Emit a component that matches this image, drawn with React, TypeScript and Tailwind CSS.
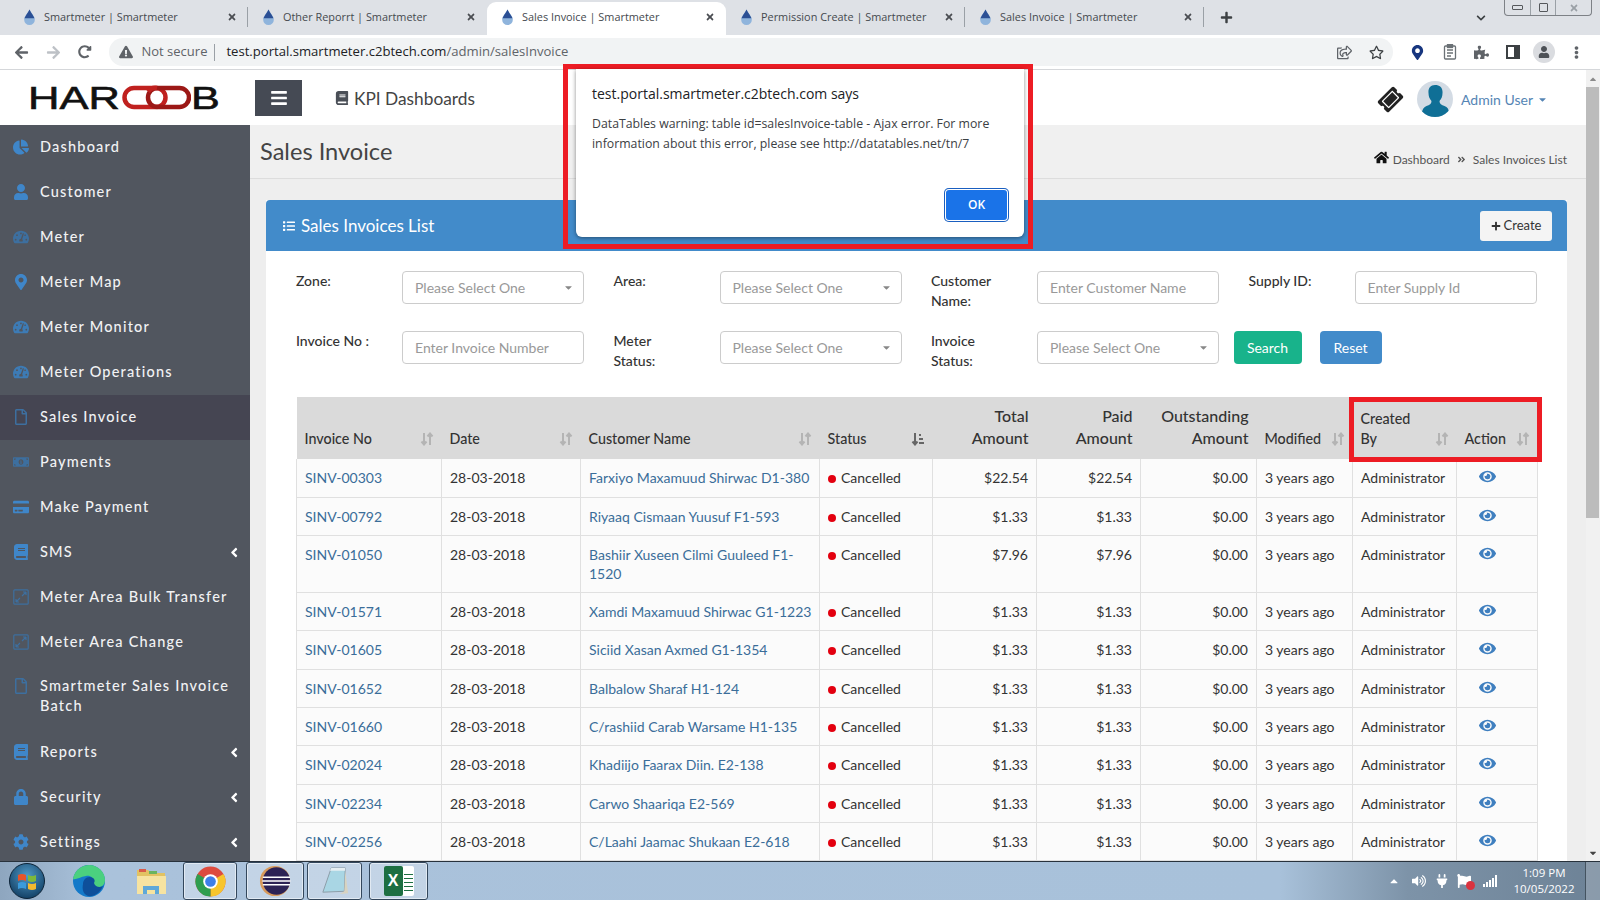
import {
  FaArrowLeft, FaArrowRight, FaRedoAlt, FaExclamationTriangle, FaRegStar, FaPuzzlePiece, FaUser, FaTimes, FaPlus,
  FaChevronDown, FaChartPie, FaTachometerAlt, FaMapMarkerAlt, FaRegFile, FaMoneyBillAlt, FaCreditCard, FaLock, FaCog,
  FaAngleLeft, FaBars, FaHome, FaEye, FaList, FaCaretDown, FaBook, FaVolumeUp, FaPlug, FaFlag, FaCaretUp, FaTicketAlt,
  FaAngleDoubleRight, FaEllipsisV, FaRegShareSquare,
} from "react-icons/fa";
import type { ReactNode } from "react";

const TABS = [
  { title: "Smartmeter | Smartmeter" },
  { title: "Other Reporrt | Smartmeter" },
  { title: "Sales Invoice | Smartmeter", active: true },
  { title: "Permission Create | Smartmeter" },
  { title: "Sales Invoice | Smartmeter" },
];

const ROWS = [
  ["SINV-00303", "Farxiyo Maxamuud Shirwac D1-380", "$22.54", "$22.54"],
  ["SINV-00792", "Riyaaq Cismaan Yuusuf F1-593", "$1.33", "$1.33"],
  ["SINV-01050", "Bashiir Xuseen Cilmi Guuleed F1-1520", "$7.96", "$7.96"],
  ["SINV-01571", "Xamdi Maxamuud Shirwac G1-1223", "$1.33", "$1.33"],
  ["SINV-01605", "Siciid Xasan Axmed G1-1354", "$1.33", "$1.33"],
  ["SINV-01652", "Balbalow Sharaf H1-124", "$1.33", "$1.33"],
  ["SINV-01660", "C/rashiid Carab Warsame H1-135", "$1.33", "$1.33"],
  ["SINV-02024", "Khadiijo Faarax Diin. E2-138", "$1.33", "$1.33"],
  ["SINV-02234", "Carwo Shaariqa E2-569", "$1.33", "$1.33"],
  ["SINV-02256", "C/Laahi Jaamac Shukaan E2-618", "$1.33", "$1.33"],
];

function Drop() {
  return (
    <svg viewBox="0 0 14 18" className="h-[16px] w-[13px] shrink-0">
      <path d="M7 0.5 C9 5 13 8 13 12 A6 6 0 0 1 1 12 C1 8 5 5 7 0.5Z" fill="#8fb4dc" />
      <path d="M7 0.5 C9 5 12 8 12.6 10.5 L1.4 10.5 C2 8 5 5 7 0.5Z" fill="#2b4f94" />
    </svg>
  );
}

function Tab({ title, active }: { title: string; active?: boolean }) {
  return (
    <div
      className={
        active
          ? "flex h-[33px] w-[239px] items-center rounded-t-[9px] bg-white pb-[3px] pl-[14px] pr-[11px]"
          : "flex h-[33px] w-[239px] items-center pb-[3px] pl-[14px] pr-[11px]"
      }
    >
      <Drop />
      <span className="ml-[8px] flex-1 truncate text-[10.9px] text-[#45494e]">{title}</span>
      <FaTimes className="text-[10px] text-[#4a4d52]" />
    </div>
  );
}

function ChromeBar() {
  return (
    <div className="font-['Open_Sans',sans-serif]">
      <div className="relative flex h-[35px] items-end bg-[#dee1e6] pl-[9px]">
        {TABS.map((t, i) => (
          <div key={i} className="flex items-center">
            <Tab title={t.title} active={t.active} />
            {i !== 1 && i !== 2 && <span className="mb-[3px] h-[20px] w-px bg-[#9aa0a6] -ml-px" />}
          </div>
        ))}
        <FaPlus className="ml-[16px] mb-[11px] text-[13px] text-[#3c4043]" />
        <FaChevronDown className="ml-[243px] mb-[12px] text-[10px] text-[#3c4043]" />
        <div className="mb-[19px] ml-[18px] flex h-[16px] w-[88px] rounded-b-[4px] border border-t-0 border-[#7d8186] text-[#55585c]">
          <span className="flex flex-1 items-center justify-center border-r border-[#9aa0a6]"><span className="h-[5px] w-[11px] rounded-[1px] border border-[#55585c]" /></span>
          <span className="flex flex-1 items-center justify-center border-r border-[#9aa0a6]"><span className="h-[9px] w-[9px] rounded-[1px] border border-[#55585c]" /></span>
          <span className="flex flex-[1.4] items-center justify-center text-[10px] text-[#9aa0a6]"><FaTimes /></span>
        </div>
      </div>
      <div className="flex h-[35px] items-center border-b border-[#d5d7da] bg-white text-[#5f6368]">
        <FaArrowLeft className="ml-[14px] text-[15px]" />
        <FaArrowRight className="ml-[17px] text-[15px] text-[#bdc1c6]" />
        <FaRedoAlt className="ml-[17px] text-[13.5px]" />
        <div className="ml-[17px] flex h-[28px] w-[1284px] items-center rounded-full bg-[#f1f3f4] pl-[10px]">
          <FaExclamationTriangle className="text-[14px] text-[#5f6368]" />
          <span className="ml-[9px] text-[13px] text-[#5f6368]">Not secure</span>
          <span className="ml-[7px] h-[17px] w-px bg-[#9aa0a6]" />
          <span className="ml-[11px] text-[13.1px] text-[#202124]">
            test.portal.smartmeter.c2btech.com<span className="text-[#5f6368]">/admin/salesInvoice</span>
          </span>
          <FaRegShareSquare className="ml-auto text-[15px]" />
          <FaRegStar className="ml-[17px] mr-[9px] text-[15px] text-[#3c4043]" />
        </div>
        <FaMapMarkerAlt className="ml-[17px] text-[15px] text-[#17367f]" />
        <svg viewBox="0 0 14 16" className="ml-[18px] h-[16px] w-[14px]" fill="none" stroke="#6b7176" strokeWidth="1.3">
          <rect x="1.5" y="2" width="11" height="13" rx="1" />
          <path d="M4 6h6M4 9h6M4 12h4" />
          <rect x="4.5" y="0.5" width="5" height="3" fill="#6b7176" />
        </svg>
        <FaPuzzlePiece className="ml-[17px] text-[15px] text-[#5f6368]" />
        <span className="ml-[17px] h-[14px] w-[14px] border-[2.5px] border-r-[6px] border-[#3c4043]" />
        <span className="ml-[13px] flex h-[22px] w-[22px] items-center justify-center rounded-full bg-[#dadce0]">
          <FaUser className="text-[12px] text-[#4d5156]" />
        </span>
        <FaEllipsisV className="ml-[15px] text-[13px] text-[#5f6368]" />
      </div>
    </div>
  );
}

function Logo() {
  return (
    <div className="flex w-[255px] items-center pl-[28px] font-['Liberation_Sans',sans-serif] text-[32px] leading-none text-[#111]">
      <span className="inline-block w-[94px] origin-left scale-x-[1.36] whitespace-nowrap [-webkit-text-stroke:0.6px_#111]">HAR</span>
      <svg viewBox="0 0 69 25" className="h-[25px] w-[69px]" fill="none" strokeWidth="4.5">
        <rect x="2.5" y="3" width="41" height="19" rx="9.5" stroke="#c0211f" />
        <rect x="26" y="3" width="41" height="19" rx="9.5" stroke="#9c1816" />
        <path d="M26 6.5A9.5 9.5 0 0 1 35 3h0" stroke="#c0211f" />
      </svg>
      <span className="inline-block origin-left scale-x-[1.35] [-webkit-text-stroke:0.6px_#111]">B</span>
    </div>
  );
}

function PageHeader() {
  return (
    <div className="flex h-[55px] items-center bg-white font-[Lato,sans-serif]">
      <Logo />
      <div className="mt-[1px] flex h-[36px] w-[47px] items-center justify-center bg-[#454a54] text-[18px] text-white">
        <FaBars />
      </div>
      <FaBook className="ml-[33px] text-[14px] text-[#4a4f57]" />
      <span className="ml-[5px] mt-[3px] text-[17.3px] text-[#444]">KPI Dashboards</span>
      <div className="ml-auto mt-[3px] flex items-center">
        <FaTicketAlt className="rotate-[-45deg] text-[23px] text-[#222]" />
        <svg viewBox="0 0 36 36" className="ml-[15px] h-[36px] w-[36px] rounded-full bg-[#d3dbe4]">
          <path d="M18 4c5 0 8 3 7.5 8 0 3-1 6-3 8 0 3 2 4 5 5 3 1 4 3 4.5 6A18 18 0 0 1 5 31c.5-3 2-5 4.500-6 3-1 5-2 5-5-2-2-3-5-3-8C11 8 13 4 18 4z" fill="#0f6f96" />
        </svg>
        <span className="ml-[8px] text-[14px] text-[#5585b5]">Admin User</span>
        <FaCaretDown className="ml-[4px] mr-[38px] text-[11px] text-[#5585b5]" />
      </div>
    </div>
  );
}

function AreaIcon() {
  return (
    <svg viewBox="0 0 16 16" className="h-[16px] w-[16px]" fill="none" stroke="currentColor" strokeWidth="1.2">
      <rect x="0.8" y="0.8" width="14.4" height="14.4" rx="1" />
      <path d="M9 7l4-4M13 3h-3M13 3v3M7 9l-4 4M3 13h3M3 13v-3" />
    </svg>
  );
}

type NavItem = { label: ReactNode; icon: ReactNode; active?: boolean; more?: boolean; tall?: boolean };

const NAV: NavItem[] = [
  { label: "Dashboard", icon: <FaChartPie className="text-[#3f86c9]" /> },
  { label: "Customer", icon: <FaUser className="text-[#3f86c9]" /> },
  { label: "Meter", icon: <FaTachometerAlt className="text-[#3d6f9f]" /> },
  { label: "Meter Map", icon: <FaMapMarkerAlt className="text-[#3f86c9]" /> },
  { label: "Meter Monitor", icon: <FaTachometerAlt className="text-[#3d7bb5]" /> },
  { label: "Meter Operations", icon: <FaTachometerAlt className="text-[#3d7bb5]" /> },
  { label: "Sales Invoice", icon: <FaRegFile className="text-[#3d6f9f]" />, active: true },
  { label: "Payments", icon: <FaMoneyBillAlt className="text-[#3d6f9f]" /> },
  { label: "Make Payment", icon: <FaCreditCard className="text-[#3f86c9]" /> },
  { label: "SMS", icon: <FaBook className="text-[#3f86c9]" />, more: true },
  { label: "Meter Area Bulk Transfer", icon: <span className="text-[#3d6f9f]"><AreaIcon /></span> },
  { label: "Meter Area Change", icon: <span className="text-[#3d6f9f]"><AreaIcon /></span> },
  { label: "Smartmeter Sales Invoice Batch", icon: <FaRegFile className="text-[#3d6f9f]" />, tall: true },
  { label: "Reports", icon: <FaBook className="text-[#3f86c9]" />, more: true },
  { label: "Security", icon: <FaLock className="text-[#3f86c9]" />, more: true },
  { label: "Settings", icon: <FaCog className="text-[#3f86c9]" />, more: true },
];

function Sidebar() {
  return (
    <aside className="w-[250px] shrink-0 overflow-hidden bg-[#51565f] font-[Lato,sans-serif] text-[14.5px] font-medium leading-[20px] tracking-[1.2px] text-[#f1f2f4]">
      {NAV.map((n, i) => (
        <div
          key={i}
          className={
            (n.active ? "bg-[#454552] " : "") +
            (n.tall ? "h-[65px] items-start pt-[11px] " : "h-[45px] items-center pb-[2px] ") +
            "flex pl-[13px] pr-[9px]"
          }
        >
          <span className={(n.tall ? "mt-[2px] " : "") + "flex w-[27px] shrink-0 justify-center pr-[11px] text-[16px]"}>{n.icon}</span>
          <span className="ml-0 w-[195px]">{n.label}</span>
          {n.more && <FaAngleLeft className="ml-auto mt-[2px] text-[15px] text-white" />}
        </div>
      ))}
    </aside>
  );
}

function Field({ label, placeholder, select }: { label: ReactNode; placeholder?: string; select?: boolean }) {
  return (
    <div className="flex h-[40px]">
      <div className="w-[106px] text-[14px] font-medium leading-[20px] text-[#333]">{label}</div>
      <div className="flex h-[33px] w-[182px] items-center justify-between rounded-[4px] border border-[#ccc] bg-white pl-[12px] pr-[9px] text-[14px] text-[#999]">
        <span>{placeholder}</span>
        {select && <FaCaretDown className="text-[11px] text-[#888]" />}
      </div>
    </div>
  );
}

function Filters() {
  return (
    <div className="grid grid-cols-[288px_288px_288px_288px] gap-x-[29.5px] gap-y-[20px] pt-[20px]">
      <Field label="Zone:" placeholder="Please Select One" select />
      <Field label="Area:" placeholder="Please Select One" select />
      <Field label={<>Customer<br />Name:</>} placeholder="Enter Customer Name" />
      <Field label="Supply ID:" placeholder="Enter Supply Id" />
      <Field label="Invoice No :" placeholder="Enter Invoice Number" />
      <Field label={<>Meter<br />Status:</>} placeholder="Please Select One" select />
      <Field label={<>Invoice<br />Status:</>} placeholder="Please Select One" select />
      <div className="-ml-[15px] flex gap-[18px] text-[14px] text-white">
        <span className="flex h-[33px] w-[68px] items-center justify-center rounded-[4px] bg-[#18b38b]">Search</span>
        <span className="flex h-[33px] w-[62px] items-center justify-center rounded-[4px] bg-[#428bca]">Reset</span>
      </div>
    </div>
  );
}

function SortIcon({ dark }: { dark?: boolean }) {
  const c = dark ? "#666" : "#b4b4b4";
  return (
    <svg viewBox="0 0 14 14" className="h-[14px] w-[14px] shrink-0" fill="none" stroke={c} strokeWidth="2">
      <path d="M4 1v11M1.5 9.5L4 12.5l2.500-3" />
      {dark ? <path d="M8 3h2M8 7h4M8 11h5" /> : <path d="M10 13V2M7.5 4.500L10 1.500l2.500 3" />}
    </svg>
  );
}

function Th({ children, sort, right, dark }: { children: ReactNode; sort?: boolean; right?: boolean; dark?: boolean }) {
  return (
    <th
      className={
        (right ? "text-right text-[16px] leading-[22px] " : "text-left text-[14.3px] leading-[20px] ") +
        "align-bottom px-[8px] pb-[10px] font-medium"
      }
    >
      <div className={sort ? "flex items-end justify-between" : ""}>
        <span>{children}</span>
        {sort && <span className="mb-[3px]"><SortIcon dark={dark} /></span>}
      </div>
    </th>
  );
}

function InvoiceTable() {
  const td = "border-r border-b border-[#e0e0e0] px-[8px] py-[9px] align-top";
  return (
    <table className="mt-[26px] w-[1241px] table-fixed border-collapse text-[14px] leading-[19px] text-[#333]">
      <colgroup>
        <col className="w-[145px]" />
        <col className="w-[139px]" />
        <col className="w-[239px]" />
        <col className="w-[113px]" />
        <col className="w-[104px]" />
        <col className="w-[104px]" />
        <col className="w-[116px]" />
        <col className="w-[96px]" />
        <col className="w-[104px]" />
        <col className="w-[81px]" />
      </colgroup>
      <thead>
        <tr className="h-[62px] bg-[#dadada]">
          <Th sort>Invoice No</Th>
          <Th sort>Date</Th>
          <Th sort>Customer Name</Th>
          <Th sort dark>Status</Th>
          <Th right>Total<br />Amount</Th>
          <Th right>Paid<br />Amount</Th>
          <Th right>Outstanding<br />Amount</Th>
          <Th sort>Modified</Th>
          <Th sort>Created<br />By</Th>
          <Th sort>Action</Th>
        </tr>
      </thead>
      <tbody>
        {ROWS.map((r) => (
          <tr key={r[0]} className="h-[38.3px] bg-[#fbfbfb]">
            <td className={td + " border-l text-[#3a6d99]"}>{r[0]}</td>
            <td className={td}>28-03-2018</td>
            <td className={td + " !pr-[3px] text-[#3a6d99]"}>{r[1]}</td>
            <td className={td}>
              <span className="mr-[5px] inline-block h-[8px] w-[8px] rounded-full bg-[#e3000f]" />
              Cancelled
            </td>
            <td className={td + " text-right"}>{r[2]}</td>
            <td className={td + " text-right"}>{r[3]}</td>
            <td className={td + " text-right"}>$0.00</td>
            <td className={td + " whitespace-nowrap"}>3 years ago</td>
            <td className={td}>Administrator</td>
            <td className={td}>
              <FaEye className="ml-[14px] text-[17px] text-[#3f7fbf]" />
            </td>
          </tr>
        ))}
      </tbody>
    </table>
  );
}

function Content() {
  return (
    <main className="min-w-0 flex-1 overflow-hidden bg-[#eeeeee] font-[Lato,sans-serif]">
      <div className="flex h-[54px] items-center justify-between border-b border-[#ddd] bg-[#f0f0f0] pl-[10px] pr-[19px]">
        <span className="text-[23.6px] text-[#444]">Sales Invoice</span>
        <span className="mt-[16px] flex items-center text-[12px] text-[#555]">
          <FaHome className="mb-[4px] mr-[4px] text-[15px] text-[#111]" />
          Dashboard
          <FaAngleDoubleRight className="mx-[7px] text-[9px]" />
          Sales Invoices List
        </span>
      </div>
      <section className="ml-[16px] mr-[19px] mt-[21px] bg-white">
        <div className="flex h-[51px] items-center justify-between rounded-t-[4px] bg-[#428bca] pl-[17px] pr-[15px] text-white">
          <span className="flex items-center text-[17px]">
            <FaList className="mr-[6px] text-[12px]" />
            Sales Invoices List
          </span>
          <span className="flex h-[30px] w-[72px] items-center justify-center rounded-[3px] bg-[#f4f4f4] text-[13px] text-[#333]">
            <FaPlus className="mr-[3px] text-[10px]" />
            Create
          </span>
        </div>
        <div className="px-[30px]">
          <Filters />
          <InvoiceTable />
        </div>
      </section>
    </main>
  );
}

function AlertDialog() {
  return (
    <div className="absolute left-[563px] top-[-6px] z-10 h-[185px] w-[470px] border-[5px] border-[#ed1c24] p-[8px] pt-0 font-['Open_Sans',sans-serif]">
      <div className="relative h-[168px] w-[448px] rounded-b-[6px] bg-white pl-[16px] pr-[14px] pt-[14px] shadow-[0_1px_4px_rgba(0,0,0,0.45)]">
        <div className="text-[14px] leading-[22px] text-[#202124]">test.portal.smartmeter.c2btech.com says</div>
        <div className="mt-[9px] text-[12.3px] leading-[20px] text-[#3c4043]">
          DataTables warning: table id=salesInvoice-table - Ajax error. For more information about this error, please see http://datatables.net/tn/7
        </div>
        <span className="absolute bottom-[15px] right-[15px] flex h-[34px] w-[65px] items-center justify-center rounded-[5px] bg-[#1a73e8] text-[12px] font-semibold text-white shadow-[inset_0_0_0_1px_#1a5fc0,inset_0_0_0_2px_#fff]">
          OK
        </span>
      </div>
    </div>
  );
}

function Tile({ w, on, children }: { w: number; on?: boolean; children: ReactNode }) {
  return (
    <div
      className={
        (on ? "border border-[#33475c] bg-white/30 shadow-[inset_0_0_0_1px_rgba(255,255,255,0.5)] " : "") +
        "flex h-[38px] shrink-0 items-center justify-center rounded-[3px]"
      }
      style={{ width: w }}
    >
      {children}
    </div>
  );
}

function Taskbar() {
  return (
    <div className="flex h-[39px] shrink-0 items-center border-t border-[#28323c] bg-[linear-gradient(90deg,#8ea6bf_0%,#aac2db_6%,#a8c1da_80%,#7d93a8_88%,#6d8296_100%)] font-['Open_Sans',sans-serif]">
      <Tile w={54}>
        <svg viewBox="0 0 36 36" className="h-[36px] w-[36px]">
          <defs>
            <radialGradient id="orb" cx="50%" cy="35%" r="70%">
              <stop offset="0%" stopColor="#4f9ac9" />
              <stop offset="100%" stopColor="#0f3a5e" />
            </radialGradient>
          </defs>
          <circle cx="18" cy="18" r="17.5" fill="url(#orb)" stroke="#0d2438" />
          <path d="M9 12q4-2 8 0v6q-4-2-8 0z" fill="#e8542a" />
          <path d="M19 12q4 2 8 0v6q-4 2-8 0z" fill="#7db93c" />
          <path d="M9 20q4-2 8 0v6q-4-2-8 0z" fill="#3b9bdc" />
          <path d="M19 20q4 2 8 0v6q-4 2-8 0z" fill="#f4b92f" />
        </svg>
      </Tile>
      <Tile w={70}>
        <svg viewBox="0 0 34 34" className="h-[34px] w-[34px]">
          <circle cx="17" cy="17" r="16" fill="#1379c9" />
          <path d="M1 15C3 4 12 1 17 1c9 0 16 7 16 15 0 6-5 8-9 7-3-1-3-3-2-5 0-4-4-7-8-6-6 1-10 4-13 3z" fill="#4bd07f" />
          <path d="M11 20c0-5 5-9 10-6 3 2 1 5 1 5 1 4 6 5 9 3-3 7-9 11-15 10C11 30 10 25 11 20z" fill="#0e4f9a" />
        </svg>
      </Tile>
      <Tile w={54}>
        <svg viewBox="0 0 32 32" className="h-[32px] w-[32px]">
          <path d="M2 5h11l3 3h14v20H2z" fill="#e2c262" />
          <rect x="4" y="4" width="7" height="3" fill="#d95c4a" />
          <rect x="14" y="6" width="8" height="3" fill="#6ab45f" />
          <rect x="2" y="11" width="29" height="18" fill="#f6e3a1" />
          <path d="M8 29v-8h16v8h-4v-4h-8v4z" fill="#5fa8d8" />
        </svg>
      </Tile>
      <span className="w-[5px]" />
      <Tile w={54} on>
        <svg viewBox="0 0 32 32" className="h-[31px] w-[31px]">
          <circle cx="16" cy="16" r="15.5" fill="#dd4b3e" />
          <path d="M16 16L29.4 8.2A15.5 15.5 0 0 1 16 31.5z" fill="#f7c52d" />
          <path d="M16 16L16 31.5A15.5 15.5 0 0 1 2.6 8.2z" fill="#2f9e4f" />
          <circle cx="16" cy="16" r="7.5" fill="#fff" />
          <circle cx="16" cy="16" r="5.5" fill="#3f7fe8" />
        </svg>
      </Tile>
      <span className="w-[9px]" />
      <Tile w={58} on>
        <svg viewBox="0 0 34 34" className="h-[32px] w-[32px]">
          <circle cx="17" cy="17" r="16" fill="#d89a5b" />
          <circle cx="18.5" cy="17" r="14.5" fill="#2c2255" />
          <path d="M4 13h29M3.5 17h30M4 21h29" stroke="#fff" strokeWidth="1.6" />
        </svg>
      </Tile>
      <span className="w-[3px]" />
      <Tile w={55} on>
        <svg viewBox="0 0 30 32" className="h-[30px] w-[28px]">
          <path d="M11 2h15l-1 25-23 1z" fill="#a9d6e4" stroke="#8a9aa5" />
          <path d="M26 5l3 24-9 1 5-3z" fill="#d8d3c0" />
          <path d="M11 2h15l-.2 3H9.5z" fill="#e6eef2" />
        </svg>
      </Tile>
      <span className="w-[7px]" />
      <Tile w={59} on>
        <span className="relative flex h-[30px] w-[30px] items-center justify-end rounded-[2px] bg-white">
          <span className="absolute left-0 top-0 flex h-[30px] w-[19px] items-center justify-center rounded-[2px] bg-[#1d6f42] font-['Liberation_Sans',sans-serif] text-[16px] font-bold text-white">X</span>
          <span className="mr-[1px] h-[20px] w-[9px] bg-[repeating-linear-gradient(0deg,#1d6f42_0,#1d6f42_1px,#fff_1px,#fff_4px)]" />
        </span>
      </Tile>
      <div className="ml-auto flex items-center text-[#fff]">
        <FaCaretUp className="text-[12px] text-white" />
        <FaVolumeUp className="ml-[12px] text-[14px] text-white" />
        <FaPlug className="ml-[9px] text-[14px] text-white" />
        <span className="relative ml-[8px]">
          <FaFlag className="text-[14px] text-white" />
          <span className="absolute -bottom-[2px] -right-[4px] h-[9px] w-[9px] rounded-full bg-[#d9333f]" />
        </span>
        <span className="ml-[12px] flex h-[12px] items-end gap-[1px]">
          <span className="h-[3px] w-[2px] bg-white" />
          <span className="h-[5px] w-[2px] bg-white" />
          <span className="h-[7px] w-[2px] bg-white" />
          <span className="h-[9px] w-[2px] bg-white" />
          <span className="h-[12px] w-[2px] bg-white" />
        </span>
        <span className="ml-[14px] w-[66px] text-center text-[11.5px] leading-[16px]">
          1:09 PM<br />10/05/2022
        </span>
        <span className="ml-[8px] h-[38px] w-[15px] border-l border-[#44535f] bg-white/20" />
      </div>
    </div>
  );
}

function Scrollbar() {
  return (
    <div className="flex w-[14px] shrink-0 flex-col bg-[#f1f1f1] text-[#8a8a8a]">
      <div className="flex h-[17px] w-[13px] items-center justify-center">
        <FaCaretUp className="text-[10px]" />
      </div>
      <div className="h-[431px] w-[13px] bg-[#bcbcbc]" />
      <div className="flex-1" />
      <div className="flex h-[16px] w-[13px] items-center justify-center">
        <FaCaretDown className="text-[10px] text-[#444]" />
      </div>
    </div>
  );
}

export default function App() {
  return (
    <div className="flex h-[900px] w-[1600px] flex-col overflow-hidden bg-white">
      <ChromeBar />
      <div className="relative flex min-h-0 flex-1">
        <div className="flex min-w-0 flex-1 flex-col">
          <PageHeader />
          <div className="flex min-h-0 flex-1">
            <Sidebar />
            <Content />
          </div>
        </div>
        <Scrollbar />
        <AlertDialog />
        {/* red annotation round the last two header cells */}
        <div className="absolute left-[1349px] top-[327px] h-[65px] w-[193px] border-[5px] border-[#ed1c24]" />
      </div>
      <Taskbar />
    </div>
  );
}
